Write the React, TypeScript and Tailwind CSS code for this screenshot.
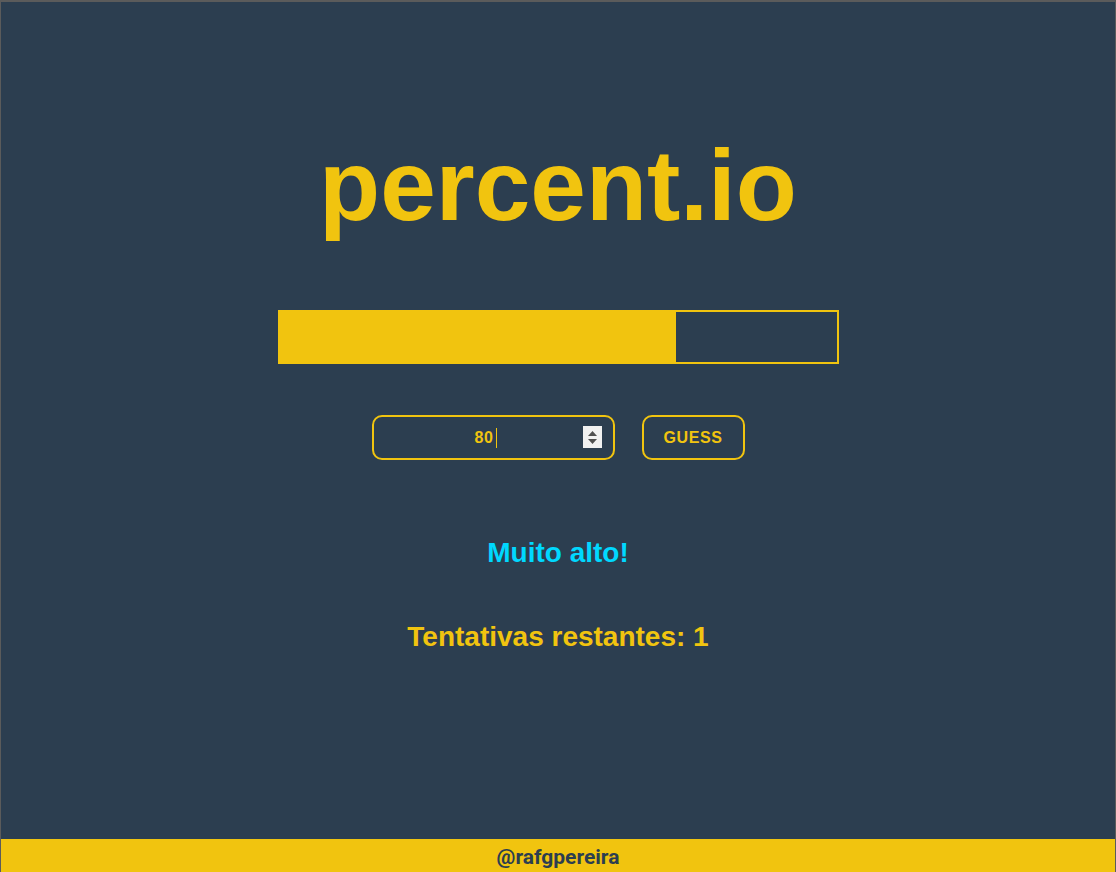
import React, { useState } from "react";

const font = "font-['Liberation_Sans',Arial,sans-serif]";

function ProgressBar({ width }: { width: number }) {
  return (
    <div className="h-[54px] w-[561px] border-2 border-[#f1c40f]">
      <div className="h-full bg-[#f1c40f]" style={{ width }} />
    </div>
  );
}

function Spinner() {
  return (
    <div className="pointer-events-none absolute right-[13px] top-[11px] flex h-[22px] w-[19px] flex-col items-center justify-center gap-[3px] bg-[#f1f1f1]">
      <svg width="9" height="5" viewBox="0 0 9 5">
        <path d="M4.5 0L9 5H0z" fill="#505050" />
      </svg>
      <svg width="9" height="5" viewBox="0 0 9 5">
        <path d="M0 0h9L4.5 5z" fill="#505050" />
      </svg>
    </div>
  );
}

export default function App() {
  const [guess, setGuess] = useState("80");
  const tries = 1;

  return (
    <div
      className={`flex h-[872px] flex-col border-x border-t-2 border-[#5b5b5b] bg-[#2c3e50] ${font}`}
    >
      <main className="flex flex-1 flex-col items-center">
        <h1 className="mt-[133px] text-[100px] font-bold leading-none text-[#f1c40f]">
          percent.io
        </h1>

        <div className="mt-[75px] ml-[1px]">
          <ProgressBar width={396} />
        </div>

        <div className="mt-[51px] flex items-center gap-[27px]">
          <div className="relative">
            <input
              type="number"
              value={guess}
              onChange={(e) => setGuess(e.target.value)}
              className="h-[45px] w-[243px] rounded-[10px] border-2 border-[#f1c40f] bg-transparent pl-[12px] pr-[30px] text-center text-[16px] font-bold tracking-[0.5px] text-[#f1c40f] caret-[#f1c40f] outline-none [appearance:textfield] [&::-webkit-inner-spin-button]:appearance-none [&::-webkit-outer-spin-button]:appearance-none"
            />
            {/* caret + spinner as in the focused state */}
            <span className="pointer-events-none absolute left-[124px] top-[13px] h-[20px] w-px bg-[#f1c40f]" />
            <Spinner />
          </div>
          <button className="h-[45px] w-[103px] rounded-[10px] border-2 border-[#f1c40f] text-[16px] font-bold tracking-[0.6px] text-[#f1c40f]">
            GUESS
          </button>
        </div>

        <p className="mt-[79px] text-[28px] font-bold leading-none text-[#00d8ff]">
          Muito alto!
        </p>
        <p className="mt-[56px] text-[28px] font-bold leading-none text-[#f1c40f]">
          Tentativas restantes: {tries}
        </p>
      </main>

      <footer className="flex h-[33px] items-center justify-center bg-[#f1c40f] pt-[4px] font-['Roboto',sans-serif] text-[21px] font-bold text-[#2c3e50]">
        @rafgpereira
      </footer>
    </div>
  );
}
